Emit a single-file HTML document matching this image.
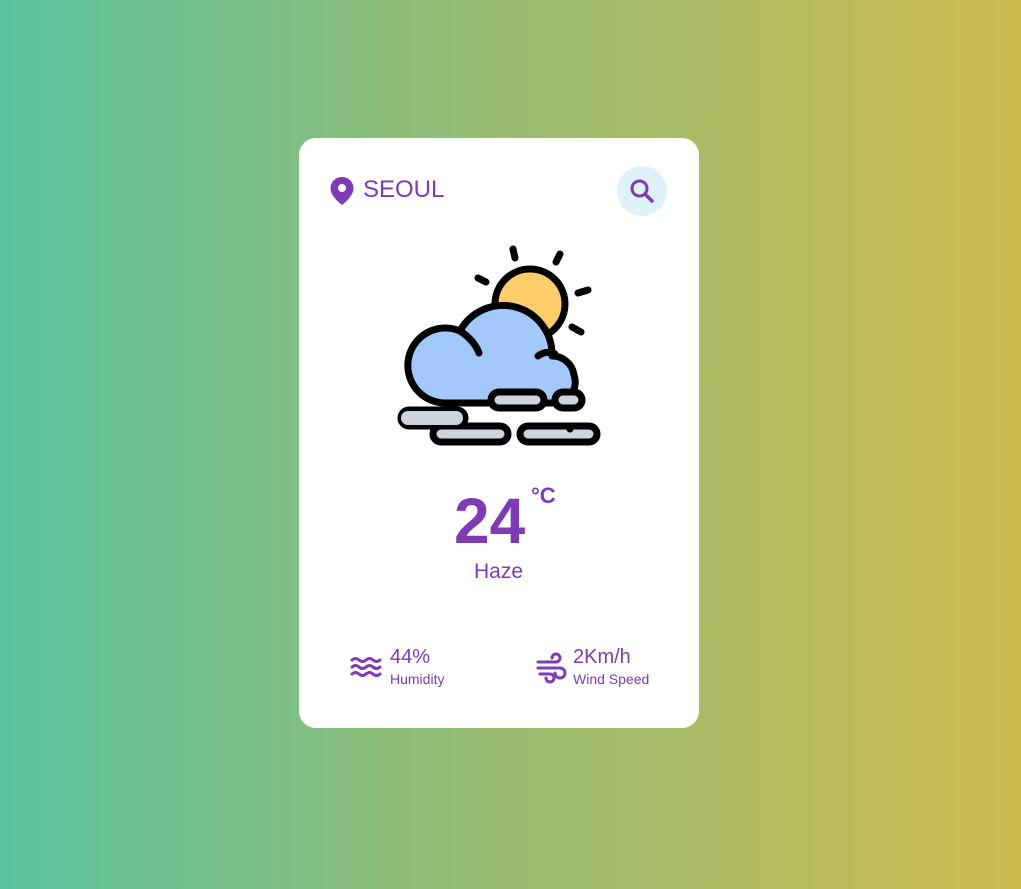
<!DOCTYPE html>
<html><head><style>
html,body{margin:0;width:1021px;height:889px;overflow:hidden}
body{background:linear-gradient(90deg,#58c29e 0%,#8fbd78 40%,#b4bb60 75%,#cdbb4e 100%);font-family:"Liberation Sans",Roboto,sans-serif;position:relative}
.card{position:absolute;left:299px;top:138px;width:400px;height:590px;background:#fff;border-radius:17px}
.t{position:absolute;color:#7e3bb5}
</style></head><body>
<div class="card"></div>
<svg width="1021" height="889" style="position:absolute;left:0;top:0">
<path d="M342 177c-6.5 0-11.5 5-11.5 11.5 0 8 11.5 16.5 11.5 16.5s11.5-8.5 11.5-16.5c0-6.5-5-11.5-11.5-11.5z" fill="#7e3bb5"/>
<circle cx="342" cy="188" r="4" fill="#fff"/>
<circle cx="642" cy="191" r="25" fill="#dff1fb"/>
<circle cx="639.5" cy="188.5" r="7.5" fill="none" stroke="#7e3bb5" stroke-width="3"/>
<path d="M645 194l7 7" stroke="#7e3bb5" stroke-width="3.5" stroke-linecap="round"/>
<g stroke="#000" stroke-width="7" stroke-linecap="round" stroke-linejoin="round">
<path d="M513 249l2 9M560 254l-4 8M478 278l8 4M588 290l-10 3M572 327l9 5"/>
<circle cx="530" cy="304" r="35" fill="#ffcd6b"/>
<path d="M446 403 H560 A22 22 0 0 0 574 375 A22 22 0 0 0 552 356 A49 49 0 0 0 460 331 A37.5 37.5 0 1 0 446 403 Z" fill="#a3c8fb"/>
<path d="M460 331 Q474 340 479 353M538 356 Q546 350 555 354" fill="none"/>
<rect x="491" y="392" width="53" height="16" rx="8" fill="#cfd3de"/>
<rect x="555" y="392" width="27" height="16" rx="8" fill="#cfd3de"/>
<rect x="401" y="410" width="64" height="16" rx="8" fill="#cfd3de"/>
<rect x="433" y="426" width="75" height="16" rx="8" fill="#cfd3de"/>
<rect x="401" y="411" width="62" height="14" rx="7" fill="#cfd3de" stroke="none"/>
<rect x="520" y="426" width="77" height="16" rx="8" fill="#cfd3de"/>
</g>
<circle cx="570" cy="429" r="3.5" fill="#000"/>
<g stroke="#7e3bb5" stroke-width="3" fill="none" stroke-linecap="round">
<path d="M352 660q3.5-3 7 0t7 0t7 0t7 0M352 667q3.5-3 7 0t7 0t7 0t7 0M352 674q3.5-3 7 0t7 0t7 0t7 0"/>
<path d="M538 662h18a4 4 0 1 0-4-4M538 668h22a5 5 0 1 1-5 5M540 674h10a4 4 0 1 1-4 4"/>
</g>
</svg>
<div class="t" style="left:363px;top:176px;font-size:24px">SEOUL</div>
<div class="t" style="left:454px;top:484px;font-size:64px;font-weight:bold;line-height:74px">24</div>
<div class="t" style="left:531px;top:483px;font-size:22px;font-weight:bold">°C</div>
<div class="t" style="left:474px;top:560px;font-size:21px">Haze</div>
<div class="t" style="left:390px;top:646px;font-size:20px">44%</div>
<div class="t" style="left:390px;top:671px;font-size:14px">Humidity</div>
<div class="t" style="left:573px;top:646px;font-size:20px">2Km/h</div>
<div class="t" style="left:573px;top:671px;font-size:14px">Wind Speed</div>
</body></html>
